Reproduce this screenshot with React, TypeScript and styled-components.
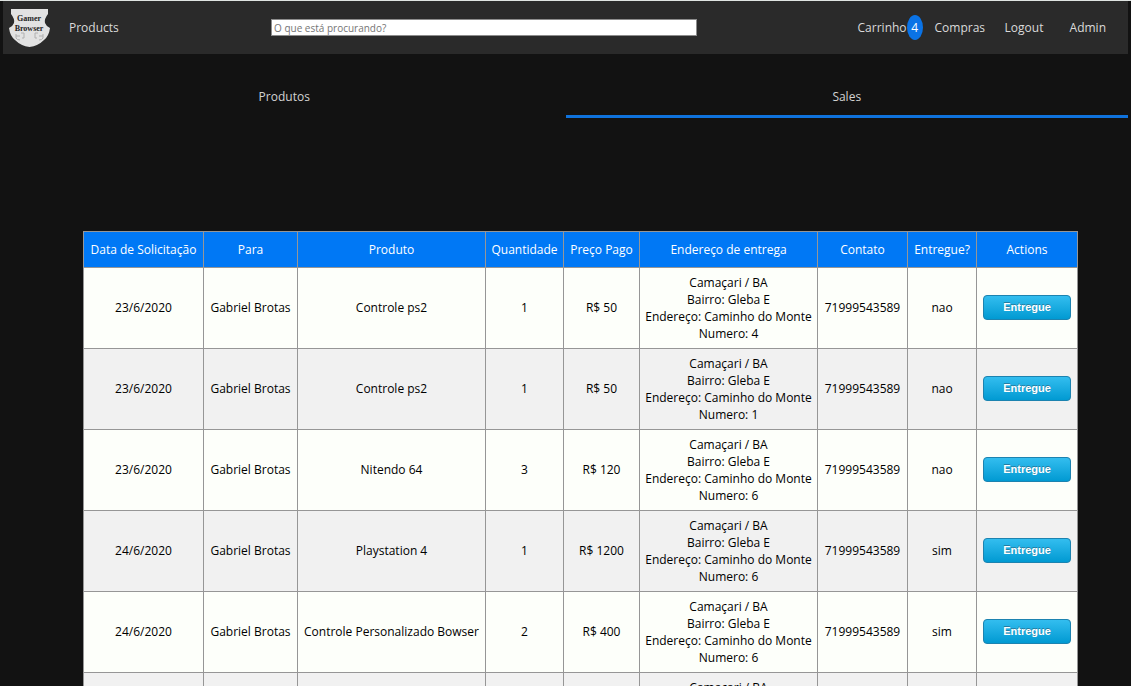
import React from "react";
import styled, { createGlobalStyle, css } from "styled-components";

const GlobalStyle = createGlobalStyle`
  *, *::before, *::after { box-sizing: border-box; }
  html { scrollbar-width: none; }
  body {
    margin: 0;
    background: #121212;
    color: #dadada;
    font-family: "Open Sans", "Noto Sans", sans-serif;
    font-size: 12px;
    line-height: 17px;
  }
`;

const Page = styled.div`
  min-height: 100vh;
  padding: 0 3px;
  border-top: 1px solid #dfe4e2;
`;

const Header = styled.header`
  display: flex;
  align-items: center;
  justify-content: space-between;
  height: 53px;
  padding: 0 22px 0 6px;
  background: #2a2a2a;
`;

const Brand = styled.div`
  display: flex;
  align-items: center;
  flex: 0 0 262px;
  gap: 19px;
`;

const navText = css`
  color: #dadada;
  font-weight: 500;
  text-decoration: none;
`;

const NavLink = styled.a`
  ${navText}
`;

const LogoLink = styled.a`
  display: block;
  height: 40px;
`;

const Search = styled.input`
  flex: 0 1 426px;
  min-width: 80px;
  height: 17px;
  margin-right: auto;
  padding: 0 2px;
  border: 1px solid #8c8c8c;
  border-radius: 0;
  background: #fff;
  color: #222;
  font: 10px "Open Sans", sans-serif;
  &::placeholder { color: #757575; opacity: 1; }
`;

const UserNav = styled.nav`
  display: grid;
  grid-template-columns: 77px 70px 65px auto;
  align-items: center;
`;

const CartLink = styled.a`
  ${navText}
  display: flex;
  align-items: center;
`;

const Badge = styled.span`
  width: 16px;
  height: 25px;
  border-radius: 50%;
  background: #0a73e6;
  color: #fff;
  line-height: 25px;
  text-align: center;
`;

const Tabs = styled.nav`
  display: grid;
  grid-template-columns: 1fr 1fr;
  margin-top: 23px;
`;

const Tab = styled.a<{ $active?: boolean }>`
  height: 41px;
  padding-top: 11px;
  border-bottom: 3px solid ${(p) => (p.$active ? "#0f72dc" : "transparent")};
  color: #d2d2d2;
  text-align: center;
  text-decoration: none;
`;

const Main = styled.main`
  display: flex;
  justify-content: center;
  padding: 113px 0 40px 30px;
`;

const Table = styled.table`
  border-collapse: collapse;
  color: #000;
  text-align: center;
  white-space: nowrap;
`;

const Col = styled.col<{ $w: number }>`
  width: ${(p) => p.$w}px;
`;

const HeadCell = styled.th`
  height: 36px;
  padding: 0 5px;
  border: 1px solid #969696;
  background: #0078f5;
  color: #fff;
  font-weight: 500;
`;

const Row = styled.tr`
  background: #fdfffa;
  &:nth-child(even) { background: #f1f1f1; }
`;

const Cell = styled.td`
  height: 81px;
  padding: 5px 5px 7px;
  border: 1px solid #969696;
`;

const AddressCell = styled(Cell)`
  padding: 6px 5px;
`;

const AddressLine = styled.div``;

const DeliverButton = styled.button`
  display: block;
  width: 88px;
  height: 25px;
  margin: 0 auto;
  padding: 0;
  border: 1px solid #1c83b0;
  border-radius: 4px;
  background: linear-gradient(#33bdef, #019ad2);
  color: #fff;
  font: bold 11px "Liberation Sans", Arial, sans-serif;
  text-shadow: 0 -1px 0 #287ca0;
  cursor: pointer;
`;

const columns: [string, number][] = [
  ["Data de Solicitação", 120],
  ["Para", 94],
  ["Produto", 188],
  ["Quantidade", 78],
  ["Preço Pago", 76],
  ["Endereço de entrega", 178],
  ["Contato", 90],
  ["Entregue?", 69],
  ["Actions", 101],
];

const sales = [
  { date: "23/6/2020", product: "Controle ps2", qty: 1, price: 50, number: 4, delivered: "nao" },
  { date: "23/6/2020", product: "Controle ps2", qty: 1, price: 50, number: 1, delivered: "nao" },
  { date: "23/6/2020", product: "Nitendo 64", qty: 3, price: 120, number: 6, delivered: "nao" },
  { date: "24/6/2020", product: "Playstation 4", qty: 1, price: 1200, number: 6, delivered: "sim" },
  { date: "24/6/2020", product: "Controle Personalizado Bowser", qty: 2, price: 400, number: 6, delivered: "sim" },
  { date: "24/6/2020", product: "Playstation 4", qty: 1, price: 1200, number: 6, delivered: "sim" },
];

const Logo = () => (
  <svg width="41" height="40" viewBox="0 0 41 40" role="img" aria-label="Gamer Browser">
    <path
      d="M2 1 H39 V6 Q35 11 36 15 Q37 18 41 20 Q40 28 35 32 Q29 38 20.500 39 Q12 38 6 32 Q1 28 0 20 Q4 18 5 15 Q6 11 2 6 Z"
      fill="#e2e2e2"
    />
    <path
      d="M7 28 H11 M7 26 V30 Q8 32 11 32 M12 25 H15 V30 H13 M34 28 H30 M34 26 V30 Q33 32 30 32 M29 25 H26 V30 H28"
      fill="none"
      stroke="#b0b0b0"
      strokeWidth="1"
    />
    <g fill="#222" fontFamily="Liberation Serif, serif" fontWeight="bold" fontSize="8" textAnchor="middle">
      <text x="20" y="13">Gamer</text>
      <text x="20" y="23">Browser</text>
    </g>
  </svg>
);

export default function App() {
  return (
    <Page>
      <GlobalStyle />
      <Header>
        <Brand>
          <LogoLink href="#"><Logo /></LogoLink>
          <NavLink href="#products">Products</NavLink>
        </Brand>
        <Search type="search" aria-label="O que está procurando?" placeholder="O que está procurando?" />
        <UserNav>
          <CartLink href="#carrinho">Carrinho<Badge>4</Badge></CartLink>
          <NavLink href="#compras">Compras</NavLink>
          <NavLink href="#logout">Logout</NavLink>
          <NavLink href="#admin">Admin</NavLink>
        </UserNav>
      </Header>
      <Tabs>
        <Tab href="#produtos">Produtos</Tab>
        <Tab href="#sales" $active aria-current="page">Sales</Tab>
      </Tabs>
      <Main>
        <Table>
          <colgroup>
            {columns.map(([name, w]) => <Col key={name} $w={w} />)}
          </colgroup>
          <thead>
            <tr>
              {columns.map(([name]) => <HeadCell key={name} scope="col">{name}</HeadCell>)}
            </tr>
          </thead>
          <tbody>
            {sales.map((s, i) => (
              <Row key={i}>
                <Cell>{s.date}</Cell>
                <Cell>Gabriel Brotas</Cell>
                <Cell>{s.product}</Cell>
                <Cell>{s.qty}</Cell>
                <Cell>R$ {s.price}</Cell>
                <AddressCell>
                  <AddressLine>Camaçari / BA</AddressLine>
                  <AddressLine>Bairro: Gleba E</AddressLine>
                  <AddressLine>Endereço: Caminho do Monte</AddressLine>
                  <AddressLine>Numero: {s.number}</AddressLine>
                </AddressCell>
                <Cell>71999543589</Cell>
                <Cell>{s.delivered}</Cell>
                <Cell><DeliverButton type="button">Entregue</DeliverButton></Cell>
              </Row>
            ))}
          </tbody>
        </Table>
      </Main>
    </Page>
  );
}
